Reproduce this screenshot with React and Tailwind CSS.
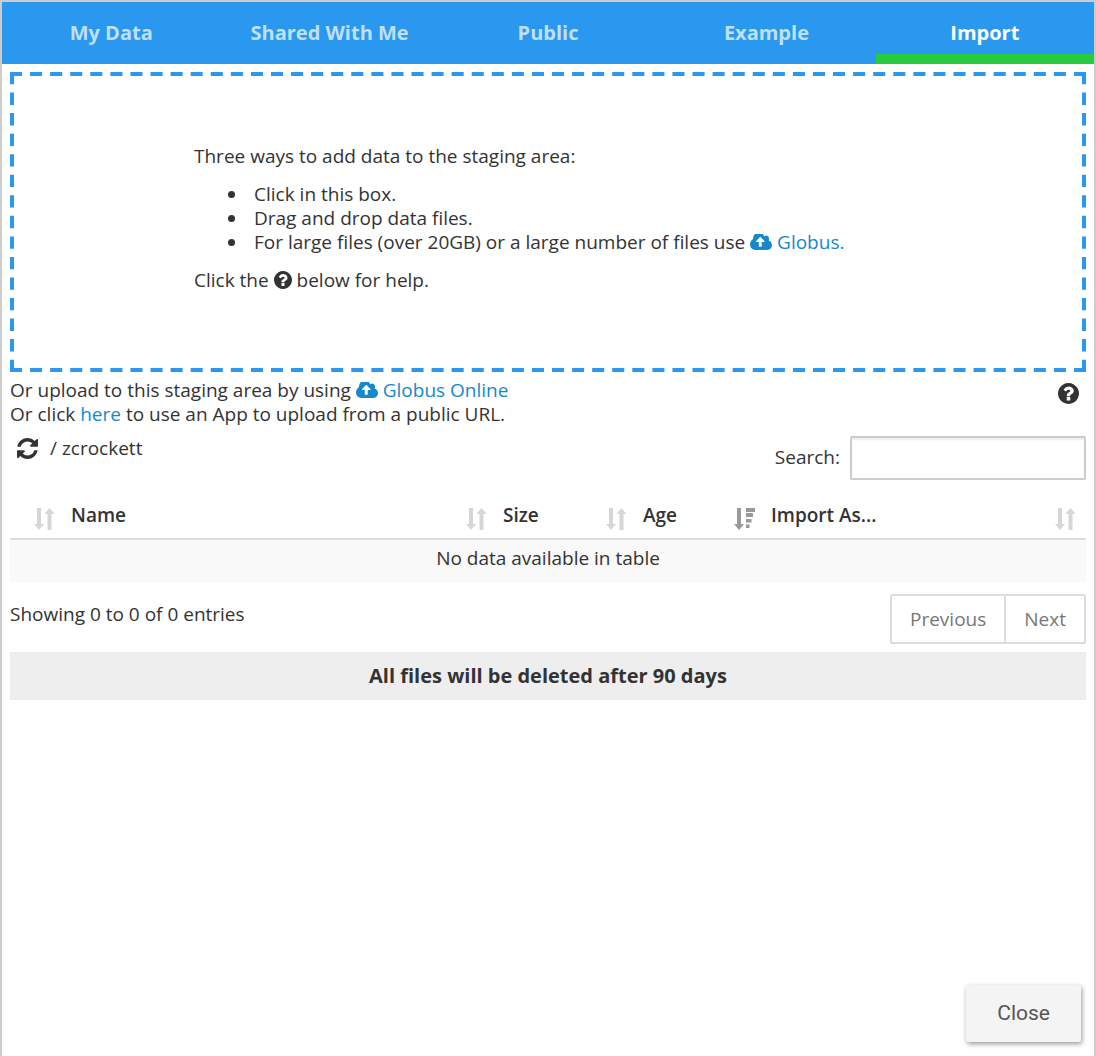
const tabs = ["My Data", "Shared With Me", "Public", "Example", "Import"];

const columns = [
  { label: "", sort: "none", width: "w-[51px]", padding: "justify-end pr-1.5" },
  { label: "Name", sort: "none", width: "", padding: "justify-between pl-2.5 pr-1.5" },
  { label: "Size", sort: "none", width: "w-[140px]", padding: "justify-between pl-2.5 pr-1.5" },
  { label: "Age", sort: "desc", width: "w-[128px]", padding: "justify-between pl-2.5 pr-1.5" },
  { label: "Import As...", sort: "none", width: "w-[325px]", padding: "justify-between pl-2.5 pr-2.5" },
];

function CloudUploadIcon() {
  return (
    <svg viewBox="0 256 1920 1280" className="inline-block h-4 w-[22px] align-[-1px]" preserveAspectRatio="none" fill="currentColor" aria-hidden="true">
      <path d="M1280 864q0-14-9-23l-352-352q-9-9-23-9t-23 9l-351 351q-10 12-10 24 0 14 9 23t23 9h224v352q0 13 9.5 22.5t22.5 9.5h192q13 0 22.5-9.5t9.5-22.5v-352h224q13 0 22.5-9.5t9.5-22.5zm640 288q0 159-112.5 271.5t-271.5 112.5h-1088q-185 0-316.5-131.5t-131.5-316.5q0-130 70-240t188-165q-2-30-2-43 0-212 150-362t362-150q156 0 285.5 87t188.5 231q71-62 166-62 106 0 181 75t75 181q0 76-41 138 130 31 213.5 135.5t83.5 238.5z" />
    </svg>
  );
}

function QuestionIcon({ className }) {
  return (
    <svg viewBox="128 128 1536 1536" className={className} fill="currentColor" aria-hidden="true">
      <path d="M1024 1376v-192q0-14-9-23t-23-9h-192q-14 0-23 9t-9 23v192q0 14 9 23t23 9h192q14 0 23-9t9-23zm256-672q0-88-55.500-163t-138.500-116-170-41q-243 0-371 213-15 24 8 42l132 100q7 6 19 6 16 0 25-12 53-68 86-92 34-24 86-24 48 0 85.500 26t37.500 59q0 38-20 61t-68 45q-63 28-115.500 86.500t-52.500 125.500v36q0 14 9 23t23 9h192q14 0 23-9t9-23q0-19 21.500-49.500t54.500-49.500q32-18 49-28.500t46-35 44.500-48 28-60.500 12.500-81zm384 192q0 209-103 385.500t-279.500 279.500-385.500 103-385.500-103-279.500-279.500-103-385.500 103-385.500 279.500-279.500 385.500-103 385.500 103 279.500 279.500 103 385.500z" />
    </svg>
  );
}

function RefreshIcon() {
  return (
    <svg viewBox="0 0 1536 1536" className="size-[21px]" fill="currentColor" aria-hidden="true">
      <path d="M1511 928q0 5-1 7-64 268-268 434.500t-478 166.500q-146 0-282.500-55t-243.500-157l-129 129q-19 19-45 19t-45-19-19-45v-448q0-26 19-45t45-19h448q26 0 45 19t19 45-19 45l-137 137q71 66 161 102t187 36q134 0 250-65t186-179q11-17 53-117 8-23 30-23h192q13 0 22.500 9.500t9.500 22.500zm25-800v448q0 26-19 45t-45 19h-448q-26 0-45-19t-19-45 19-45l138-138q-148-137-349-137-134 0-250 65t-186 179q-11 17-53 117-8 23-30 23h-199q-13 0-22.500-9.500t-9.500-22.500v-7q65-268 270-434.500t480-166.500q146 0 284 55.500t245 156.500l130-129q19-19 45-19t45 19 19 45z" />
    </svg>
  );
}

function SortIcon({ sort }) {
  const descending = sort === "desc";
  return (
    <svg
      viewBox="0 0 22 22"
      className={descending ? "size-[22px] shrink-0 text-[#999999]" : "size-[22px] shrink-0 text-[#d6d6d6]"}
      fill="currentColor"
      aria-hidden="true"
    >
      <path d="M4 0h4v16h3L6 22 1 16h3z" />
      {descending ? (
        <path d="M13 0h9v4h-9zM13 5h7v4h-7zM13 11h5.500v3.500H13zM13 16.500h3.500V20H13z" />
      ) : (
        <path d="M14.500 22h4V6h3l-5-6-5 6h3z" />
      )}
    </svg>
  );
}

function DashedFrame() {
  const edges = [
    { x1: "0", y1: "2", x2: "100%", y2: "2", length: 1072 },
    { x1: "0", y1: "100%", x2: "100%", y2: "100%", length: 1072, shift: "-translate-y-0.5" },
    { x1: "2", y1: "0", x2: "2", y2: "100%", length: 292 },
    { x1: "100%", y1: "0", x2: "100%", y2: "100%", length: 292, shift: "-translate-x-0.5" },
  ];
  return (
    <svg className="pointer-events-none absolute inset-0 size-full text-[#2b98f0]" stroke="currentColor" strokeWidth="4" aria-hidden="true">
      {edges.map(({ length, shift, ...edge }, i) => (
        <line key={i} {...edge} className={shift} pathLength={length} strokeDasharray="12 8" />
      ))}
    </svg>
  );
}

function Bullet({ children }) {
  return (
    <li className="flex items-center gap-[19px] before:size-[7px] before:shrink-0 before:rounded-full before:bg-current">
      <span>{children}</span>
    </li>
  );
}

export default function App() {
  return (
    <div className="flex min-h-screen flex-col border-2 border-b-0 border-[#cccccc] bg-white font-['Open_Sans',sans-serif] text-[19px] leading-6 text-[#333333]">
      <nav className="flex h-[62px] bg-[#2b98f0] text-xl font-bold" role="tablist">
        {tabs.map((tab) => (
          <button
            key={tab}
            type="button"
            role="tab"
            aria-selected={tab === "Import"}
            className={
              tab === "Import"
                ? "flex-1 border-b-10 border-[#26cc3e] pt-2.5 text-white"
                : "flex-1 border-b-10 border-transparent pt-2.5 text-[#bfe0fb]"
            }
          >
            {tab}
          </button>
        ))}
      </nav>

      <main className="flex flex-1 flex-col px-2 pt-2">
        <section className="relative h-[300px] px-[184px] pt-[72px]">
          <DashedFrame />
          <p>Three ways to add data to the staging area:</p>
          <ul className="my-3.5 pl-[34px]">
            <Bullet>Click in this box.</Bullet>
            <Bullet>Drag and drop data files.</Bullet>
            <Bullet>
              For large files (over 20GB) or a large number of files use{" "}
              <a href="#globus" className="text-[#1688cb]">
                <CloudUploadIcon /> Globus.
              </a>
            </Bullet>
          </ul>
          <p>
            Click the <QuestionIcon className="inline-block size-[18px] align-[-2px]" /> below for help.
          </p>
        </section>

        <section className="flex items-start justify-between pt-1.5">
          <div>
            <p>
              Or upload to this staging area by using{" "}
              <a href="#globus-online" className="text-[#1688cb]">
                <CloudUploadIcon /> Globus Online
              </a>
            </p>
            <p>
              Or click <a href="#upload-app" className="text-[#1688cb]">here</a> to use an App to upload from a public URL.
            </p>
          </div>
          <button type="button" aria-label="Help" className="mt-[5px] mr-[7px]">
            <QuestionIcon className="size-[21px]" />
          </button>
        </section>

        <section className="flex items-start justify-between pt-2.5">
          <div className="flex items-center gap-3 pl-[7px]">
            <button type="button" aria-label="Refresh">
              <RefreshIcon />
            </button>
            <span>/ zcrockett</span>
          </div>
          <div className="flex items-center gap-2.5">
            <label htmlFor="search" className="pb-0.5">Search:</label>
            <input
              id="search"
              type="search"
              className="h-11 w-[236px] rounded-xs border-2 border-[#cccccc] px-2 shadow-[inset_0_2px_2px_rgba(0,0,0,0.075)] outline-none"
            />
          </div>
        </section>

        <table className="mt-[23px] w-full table-fixed border-collapse">
          <thead>
            <tr className="border-b-2 border-[#dddddd]">
              {columns.map(({ label, sort, width, padding }, i) => (
                <th key={i} className={`${width} p-0 text-left font-semibold`}>
                  <button type="button" aria-label={label || "Type"} className={`flex h-[35px] w-full items-end pb-2 ${padding}`}>
                    {label && <span className="pb-[3px]">{label}</span>}
                    <SortIcon sort={sort} />
                  </button>
                </th>
              ))}
            </tr>
          </thead>
          <tbody>
            <tr className="bg-[#f9f9f9]">
              <td colSpan={5} className="px-2.5 pt-1.5 pb-3 text-center">
                No data available in table
              </td>
            </tr>
          </tbody>
        </table>

        <section className="flex items-start justify-between pt-3">
          <p className="pt-2">Showing 0 to 0 of 0 entries</p>
          <div className="flex h-[50px] divide-x-2 divide-[#dddddd] rounded-xs border-2 border-[#dddddd] text-[#777777]">
            <button type="button" className="px-[18px]">Previous</button>
            <button type="button" className="px-[18px]">Next</button>
          </div>
        </section>

        <p className="mt-2 bg-[#eeeeee] py-3 text-center text-xl leading-6 font-bold">All files will be deleted after 90 days</p>

        <button
          type="button"
          className="mt-auto mr-[5px] mb-3.5 h-[57px] self-end rounded-xs bg-[#f4f4f4] px-[31px] pb-0.5 font-[Roboto,sans-serif] text-[21px] text-[#555555] shadow-[1px_2px_5px_rgba(0,0,0,0.4)]"
        >
          Close
        </button>
      </main>
    </div>
  );
}
